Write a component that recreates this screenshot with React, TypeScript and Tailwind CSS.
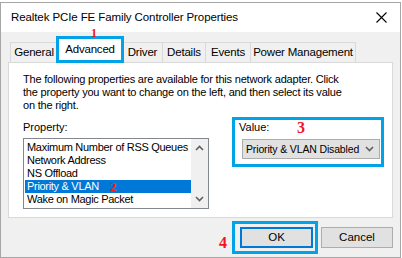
import React from "react";

const Chevron = ({ up = false, className = "" }: { up?: boolean; className?: string }) => (
  <svg width="9" height="6" viewBox="0 0 9 6" className={className}>
    <path d={up ? "M1 5 L4.5 1.5 L8 5" : "M1 1 L4.5 4.5 L8 1"} fill="none" stroke="#606060" strokeWidth="1.6" />
  </svg>
);

const Num = ({ n, className }: { n: string; className: string }) => (
  <span className={`absolute font-['Liberation_Serif',serif] font-bold text-[#f0141e] leading-none ${className}`}>{n}</span>
);

export default function App() {
  const items = ["Maximum Number of RSS Queues", "Network Address", "NS Offload", "Priority & VLAN", "Wake on Magic Packet"];
  return (
    <div className="w-[402px] h-[258px] bg-white pt-[2px] overflow-hidden font-['Liberation_Sans',Arial,sans-serif] text-black relative">
      <div className="w-[401px] h-[256px] border border-[#a6a6a6] bg-[#f0f0f0] flex flex-col">
        {/* Title bar */}
        <div className="h-[29px] bg-white flex items-center justify-between pl-[10px] pr-[13px] shrink-0">
          <span className="text-[11.5px] tracking-[-0.1px] whitespace-nowrap">Realtek PCIe FE Family Controller Properties</span>
          <svg width="11" height="11" viewBox="0 0 11 11">
            <path d="M0.5 0.5 L10.5 10.5 M10.5 0.5 L0.5 10.5" stroke="#000" strokeWidth="1.1" />
          </svg>
        </div>
        {/* Body */}
        <div className="pl-[7px] pt-[6px] relative">
          {/* Tabs */}
          <div className="flex items-end pl-[2px] h-[24px] text-[11.5px] tracking-[-0.2px] whitespace-nowrap">
            <div className="w-[48px] h-[20px] border border-b-0 border-[#d9d9d9] flex items-center justify-center pt-[1px]">General</div>
            <div className="w-[66px] h-[25px] bg-white border border-b-0 border-[#d9d9d9] flex items-center justify-center -ml-px relative z-10 -mb-px pb-[3px]">
              Advanced
              <div className="absolute -left-[2px] -right-[2px] -top-[3px] -bottom-0 border-[3px] border-[#00a2e8]" />
              <Num n="1" className="text-[12px] left-[33px] -top-[12px]" />
            </div>
            <div className="w-[40px] h-[20px] border border-b-0 border-l-0 border-[#d9d9d9] flex items-center justify-center pt-[1px]">Driver</div>
            <div className="w-[43px] h-[20px] border border-b-0 border-l-0 border-[#d9d9d9] flex items-center justify-center pt-[1px]">Details</div>
            <div className="w-[45px] h-[20px] border border-b-0 border-l-0 border-[#d9d9d9] flex items-center justify-center pt-[1px]">Events</div>
            <div className="w-[105px] h-[20px] border border-b-0 border-l-0 border-[#d9d9d9] flex items-center justify-center pt-[1px]">Power Management</div>
          </div>
          {/* Panel */}
          <div className="w-[385px] h-[156px] bg-white border border-[#d9d9d9] pl-[14px] pt-[10px] text-[11px] leading-[13px]">
            <p className="tracking-[-0.2px] whitespace-nowrap">
              The following properties are available for this network adapter. Click
              <br />
              the property you want to change on the left, and then select its value
              <br />
              on the right.
            </p>
            <div className="flex mt-[9px]">
              <div className="w-[186px]">
                <div>Property:</div>
                <div className="mt-[4px] h-[71px] border border-[#828790] flex">
                  <div className="flex-1 pt-[2px] pl-[1px] overflow-hidden tracking-[-0.3px]">
                    {items.map((it, i) => (
                      <div
                        key={it}
                        className={`h-[13px] pl-[2px] whitespace-nowrap flex items-center ${i === 3 ? "bg-[#0078d7] text-white" : "text-black"}`}
                      >
                        <span>{it}</span>
                        {i === 3 && (
                          <span className="ml-[11px] font-['Liberation_Serif',serif] font-bold text-[#ff1a1a] text-[13px] leading-none">2</span>
                        )}
                      </div>
                    ))}
                  </div>
                  <div className="w-[17px] bg-[#f0f0f0] flex flex-col items-center justify-between py-[6px]">
                    <Chevron up />
                    <Chevron />
                  </div>
                </div>
              </div>
              <div className="ml-[30px] relative">
                <div>Value:</div>
                <div className="mt-[5px] ml-[3px] w-[138px] h-[20px] bg-[#e1e1e1] border border-[#adadad] flex items-center justify-between pl-[3px] pr-[5px]">
                  <span className="text-[10.5px] tracking-[-0.15px] whitespace-nowrap">Priority &amp; VLAN Disabled</span>
                  <Chevron />
                </div>
                <div className="absolute -left-[7px] -top-[4px] w-[152px] h-[50px] border-[3px] border-[#00a2e8]" />
                <Num n="3" className="text-[16px] left-[58px] -top-[1px]" />
              </div>
            </div>
          </div>
          {/* Buttons */}
          <div className="flex justify-end gap-[8px] mt-[9px] w-[385px] text-[11.5px]">
            <div className="relative">
              <div className="w-[73px] h-[21px] bg-[#e1e1e1] border-2 border-[#0078d7] flex items-center justify-center">OK</div>
              <div className="absolute -left-[8px] -right-[5px] -top-[6px] -bottom-[6px] border-[3px] border-[#00a2e8]" />
              <Num n="4" className="text-[16px] -left-[21px] top-[8px]" />
            </div>
            <div className="w-[72px] h-[21px] bg-[#e1e1e1] border border-[#adadad] flex items-center justify-center">Cancel</div>
          </div>
        </div>
      </div>
    </div>
  );
}
